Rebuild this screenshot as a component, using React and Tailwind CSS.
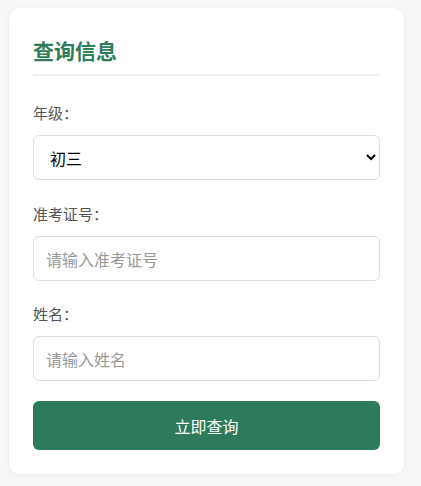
import React from 'react';

const App = () => {
  return (
    <div className="min-h-[486px] w-full bg-[#f6f7f9] pt-2 pb-3 font-['Noto_Sans_CJK_SC','Noto_Sans',sans-serif]">
      <div className="ml-[9px] w-[395px] rounded-[10px] bg-white px-6 pb-6 pt-7 shadow-[0_1px_6px_rgba(0,0,0,0.05)]">
        {/* Title */}
        <h2 className="border-b-2 border-[#eeeeee] pb-[10px] text-[21px] font-bold leading-[28px] text-[#2e7d5b]">
          查询信息
        </h2>

        <form className="mt-[26px]" onSubmit={(e) => e.preventDefault()}>
          <div className="mb-[23px]">
            <label className="mb-[11px] block text-[15px] leading-[22px] text-[#555555]">年级：</label>
            <select
              defaultValue="初三"
              className="block h-[45px] w-full rounded-[6px] border border-[#dddddd] bg-white px-3 text-[16px] text-black outline-none"
            >
              <option>初一</option>
              <option>初二</option>
              <option>初三</option>
            </select>
          </div>

          <div className="mb-[22px]">
            <label className="mb-[11px] block text-[15px] leading-[22px] text-[#555555]">准考证号：</label>
            <input
              type="text"
              placeholder="请输入准考证号"
              className="block h-[45px] w-full rounded-[6px] border border-[#dddddd] bg-white px-3 text-[16px] text-black outline-none placeholder:text-[#999999]"
            />
          </div>

          <div className="mb-5">
            <label className="mb-[11px] block text-[15px] leading-[22px] text-[#555555]">姓名：</label>
            <input
              type="text"
              placeholder="请输入姓名"
              className="block h-[45px] w-full rounded-[6px] border border-[#dddddd] bg-white px-3 text-[16px] text-black outline-none placeholder:text-[#999999]"
            />
          </div>

          <button
            type="submit"
            className="block h-[49px] w-full rounded-[6px] bg-[#2e7b5b] text-[16px] text-white"
          >
            立即查询
          </button>
        </form>
      </div>
    </div>
  );
};

export default App;
